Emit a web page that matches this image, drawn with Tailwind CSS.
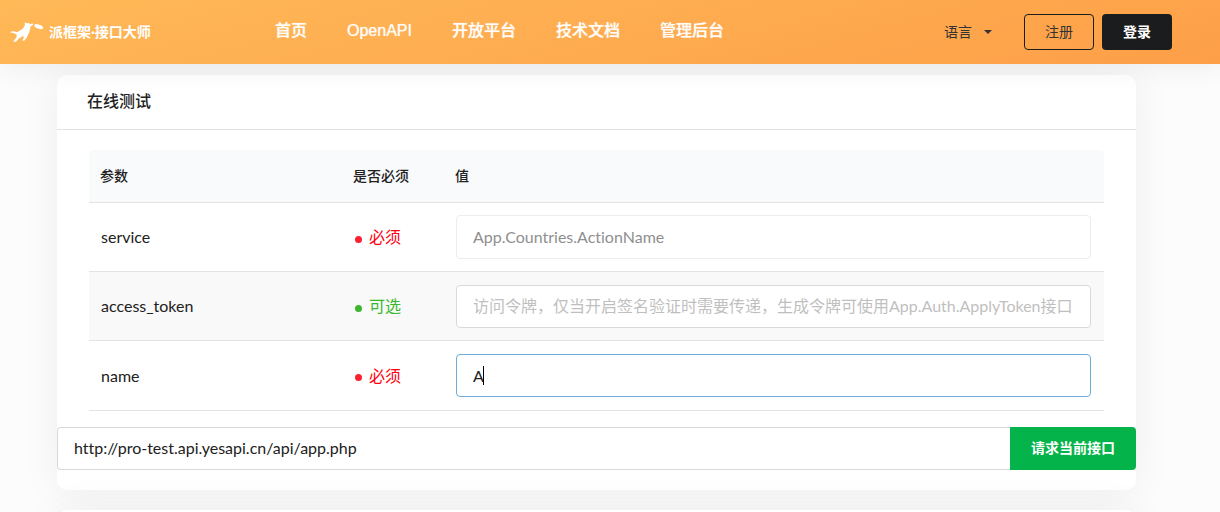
<!DOCTYPE html>
<html lang="zh-CN">
<head>
<meta charset="utf-8">
<meta name="viewport" content="width=device-width, initial-scale=1">
<title>在线测试</title>
<script src="https://cdn.jsdelivr.net/npm/@tailwindcss/browser@4"></script>
</head>
<body class="min-h-screen overflow-x-hidden bg-[#fcfcfc] font-['Lato','Noto_Sans_CJK_SC',sans-serif] text-base text-[#212121] [font-variant-ligatures:none]">
<header class="relative z-10 flex h-16 items-center bg-linear-[165deg] from-[#ffb957] to-[#fd9f48] pr-12 pl-[9px] shadow-[0_2px_30px_rgba(0,0,0,0.07)]">
  <a href="#" class="flex w-[266px] items-center gap-1 text-sm font-bold text-white">
    <svg class="h-6 w-9" viewBox="0 0 36 24" fill="#fff" aria-hidden="true">
      <path d="M1 12.500C2.500 10.600 5.600 11 7.700 12.300C9 11.500 11 10.500 13 9.200C14.700 8 15.600 6.200 15.900 4.600L15.600 2.200L17.600 3.200L19.600 3L21.200 3.900L24.200 3.500L24 5L21.500 6.400C21.200 9.700 20.200 12.500 18.900 15L17.500 18L15.600 20.600L13.300 20.800L15.100 16.800L13.800 16.300L10.400 18L7.200 21.600L4.500 22L5 20.300L7.300 17.800L7.800 14.800C6.500 13.500 4 12.700 1 12.500Z"/>
      <ellipse cx="29.700" cy="6.600" rx="4.600" ry="2.100" transform="rotate(20 29.700 6.600)"/>
    </svg>
    派框架·接口大师
  </a>
  <nav class="flex flex-1 gap-10 pb-0.5 font-['Liberation_Sans','Noto_Sans_CJK_SC',sans-serif] font-medium text-white/90 [text-shadow:0_0_1px_rgba(255,255,255,0.8)]">
    <a href="#">首页</a>
    <a href="#">OpenAPI</a>
    <a href="#">开放平台</a>
    <a href="#">技术文档</a>
    <a href="#">管理后台</a>
  </nav>
  <div class="flex items-center gap-2 text-sm">
    <button type="button" class="mr-6 flex items-center gap-3 text-[#333]">语言
      <svg class="h-1 w-2" viewBox="0 0 8 4" fill="currentColor" aria-hidden="true"><path d="M0 0H8L4 4Z"/></svg>
    </button>
    <button type="button" class="h-9 w-[70px] rounded border border-[#1b1c1d] text-[#333]">注册</button>
    <button type="button" class="h-9 w-[70px] rounded bg-[#1b1c1d] font-bold text-white">登录</button>
  </div>
</header>
<main class="mr-[84px] ml-[57px] flex flex-col gap-5 pt-[11px]">
  <section class="rounded-[10px] bg-white pb-5 shadow-[0_0_40px_rgba(0,0,0,0.06)]">
    <h1 class="h-[55px] border-b border-[#e2e3e4] pt-[14px] pl-[30px] font-medium">在线测试</h1>
    <div class="px-8 pt-5 pb-4">
      <table class="w-full table-fixed border-separate border-spacing-0">
        <thead class="text-left text-sm">
          <tr class="h-[53px]">
            <th class="w-[253px] rounded-tl border-b border-[#e2e3e4] bg-[#f9fafb] pl-[11px] font-medium">参数</th>
            <th class="w-[102px] border-b border-[#e2e3e4] bg-[#f9fafb] pl-[11px] font-medium">是否必须</th>
            <th class="rounded-tr border-b border-[#e2e3e4] bg-[#f9fafb] pl-[11px] font-medium">值</th>
          </tr>
        </thead>
        <tbody>
          <tr class="h-[69px]">
            <td class="border-b border-[#e2e3e4] pl-3"><label for="service">service</label></td>
            <td class="border-b border-[#e2e3e4] pl-[13px] text-[#ff0010]"><span class="flex items-center gap-[7px]"><i class="mt-1 size-[7px] rounded-full bg-[#fb2030]"></i>必须</span></td>
            <td class="border-b border-[#e2e3e4] pr-[13px] pl-3"><input id="service" type="text" disabled value="App.Countries.ActionName" class="block h-11 w-full rounded border border-[#ededee] bg-white px-4 pb-0.5 text-[#8f8f8f]"></td>
          </tr>
          <tr class="h-[69px] bg-[#f9f9f9]">
            <td class="border-b border-[#e2e3e4] pl-3"><label for="token">access_token</label></td>
            <td class="border-b border-[#e2e3e4] pl-[13px] text-[#39b82c]"><span class="flex items-center gap-[7px]"><i class="mt-1 size-[7px] rounded-full bg-[#39b82c]"></i>可选</span></td>
            <td class="border-b border-[#e2e3e4] pr-[13px] pl-3"><input id="token" type="text" placeholder="访问令牌，仅当开启签名验证时需要传递，生成令牌可使用App.Auth.ApplyToken接口" class="block h-[43px] w-full rounded border border-[#d8d9d9] bg-white px-4 pb-0.5 placeholder:text-[#bfbfbf]"></td>
          </tr>
          <tr class="h-[70px]">
            <td class="border-b border-[#e2e3e4] pl-3"><label for="name">name</label></td>
            <td class="border-b border-[#e2e3e4] pl-[13px] text-[#ff0010]"><span class="flex items-center gap-[7px]"><i class="mt-1 size-[7px] rounded-full bg-[#fb2030]"></i>必须</span></td>
            <td class="border-b border-[#e2e3e4] pr-[13px] pl-3"><div class="relative"><input id="name" type="text" value="A" class="block h-[43px] w-full rounded border border-[#6caed8] bg-white px-4"><span class="absolute top-3 left-[27px] h-[19px] w-px bg-black"></span></div></td>
          </tr>
        </tbody>
      </table>
    </div>
    <form class="flex h-[43px]">
      <input type="text" aria-label="接口地址" value="http://pro-test.api.yesapi.cn/api/app.php" class="min-w-0 flex-1 rounded-l border border-r-0 border-[#d8d9d9] bg-white px-4 pb-0.5 [font-kerning:normal]">
      <button type="button" class="w-[126px] rounded-r bg-[#04b34a] pb-0.5 text-sm font-bold text-white">请求当前接口</button>
    </form>
  </section>
  <section class="h-16 rounded-[10px] bg-white shadow-[0_0_40px_rgba(0,0,0,0.06)]"></section>
</main>
</body>
</html>
